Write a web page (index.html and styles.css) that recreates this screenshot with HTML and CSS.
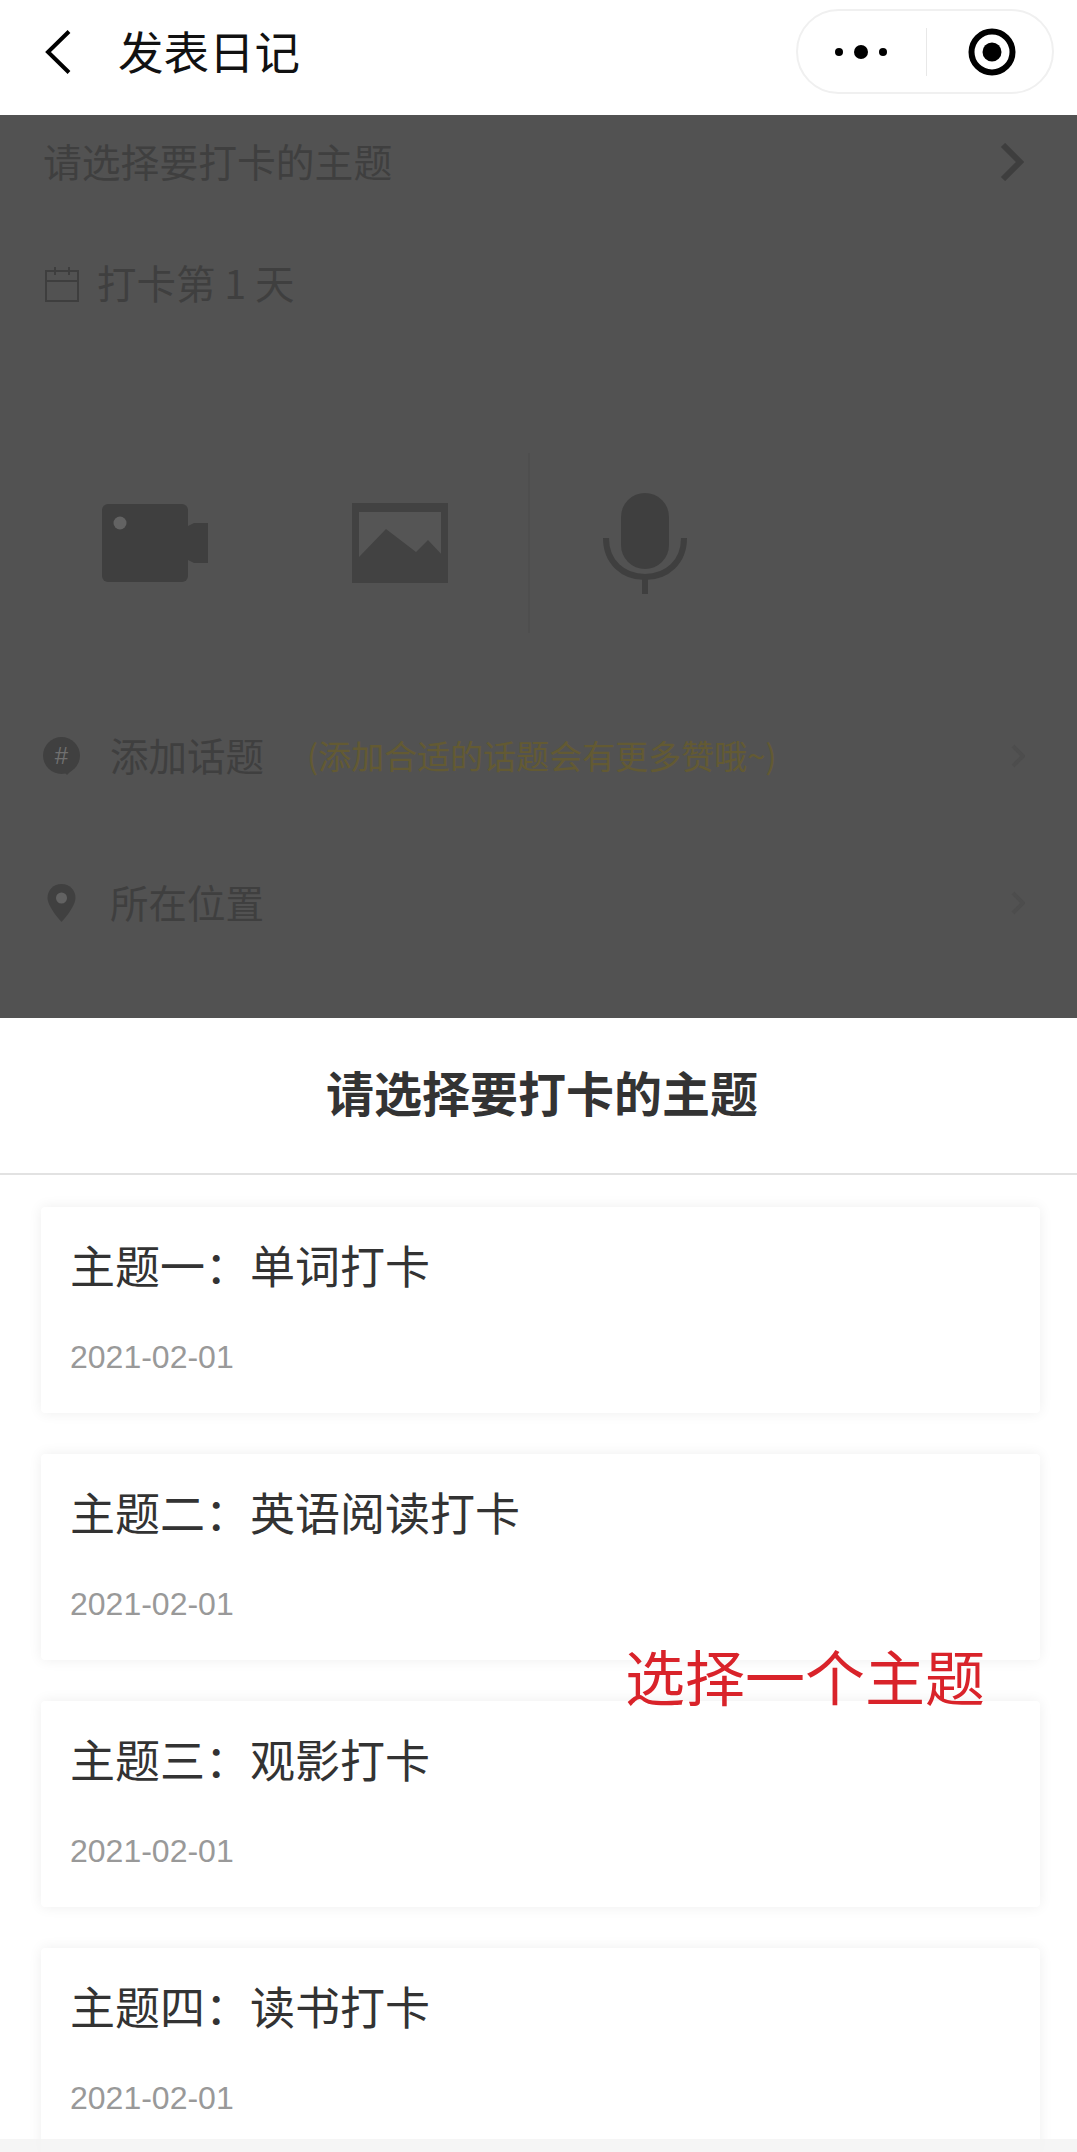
FILE: index.html
```html
<!DOCTYPE html>
<html lang="zh-CN">
<head>
  <meta charset="UTF-8" />
  <meta name="viewport" content="width=device-width, initial-scale=1.0"/>
  <title>发表日记</title>
  <link rel="stylesheet" href="styles.css">
</head>
<body>
  <div class="nav">
    <svg class="back" width="26" height="44" viewBox="0 0 26 44"><path d="M24 1.500 3 22l21 20.500" fill="none" stroke="#000" stroke-width="4"/></svg>
    <div class="nav-title">发表日记</div>
    <div class="capsule">
      <svg class="more" width="54" height="16" viewBox="0 0 54 16"><circle cx="5" cy="8" r="4" fill="#000"/><circle cx="27" cy="8" r="7" fill="#000"/><circle cx="49" cy="8" r="4" fill="#000"/></svg>
      <div class="capsule-line"></div>
      <svg class="target" width="48" height="48" viewBox="0 0 48 48"><circle cx="24" cy="24" r="20.500" fill="none" stroke="#000" stroke-width="6"/><circle cx="24" cy="24" r="9.500" fill="#000"/></svg>
    </div>
  </div>

  <div class="form">
    <div class="row-subject">
      <span>请选择要打卡的主题</span>
      <svg width="26" height="38" viewBox="0 0 26 38"><path d="M4 2l17 17L4 36" fill="none" stroke="#3e3e3e" stroke-width="6"/></svg>
    </div>
    <div class="row-day">
      <svg width="36" height="36" viewBox="0 0 36 36"><path d="M2 5h32v30H2zM2 15h32M11 1v8M25 1v8" fill="none" stroke="#3e3e3e" stroke-width="2"/></svg>
      <span>打卡第 1 天</span>
    </div>
    <div class="media">
      <svg class="media-camera" width="106" height="78" viewBox="0 0 106 78"><rect width="86" height="78" rx="6" fill="#3f3f3f"/><path d="M86 22l6-3h14v40H92l-6-3z" fill="#3f3f3f"/><circle cx="18" cy="19" r="6.500" fill="#636363"/></svg>
      <svg class="media-image" width="96" height="80" viewBox="0 0 96 80"><path d="M0 0h96v80H0z" fill="#424242"/><path d="M7 9h82v45H7z" fill="#555"/><path d="M7 54l27-28 30 23 12-12 16 17v26H7z" fill="#424242"/></svg>
      <div class="media-line"></div>
      <svg class="media-mic" width="84" height="101" viewBox="0 0 84 101"><rect x="18" width="48" height="76" rx="24" fill="#3f3f3f"/><path d="M3 45c0 24 17 39 39 39s39-15 39-39M42 84v17" fill="none" stroke="#3f3f3f" stroke-width="6"/></svg>
    </div>
    <div class="row-link">
      <svg class="row-icon" width="37" height="38" viewBox="0 0 37 38"><circle cx="18.500" cy="18.500" r="18.500" fill="#404040"/><path d="M20 34l8 0-4 4z" fill="#404040"/><text x="18.500" y="27" text-anchor="middle" class="topic-mark">#</text></svg>
      <span class="row-text">添加话题</span>
      <span class="row-hint">(添加合适的话题会有更多赞哦~)</span>
      <svg class="row-arrow" width="14" height="24" viewBox="0 0 14 24"><path d="M2 2l10 10L2 22" fill="none" stroke="#4d4d4d" stroke-width="4"/></svg>
    </div>
    <div class="row-link row-place">
      <svg class="row-icon" width="37" height="38" viewBox="0 0 36 38"><path d="M18 0c8 0 14 6 14 14 0 9-14 24-14 24S4 23 4 14C4 6 10 0 18 0z" fill="#404040"/><circle cx="18" cy="14" r="5.500" fill="#626262"/></svg>
      <span class="row-text">所在位置</span>
      <svg class="row-arrow" width="14" height="24" viewBox="0 0 14 24"><path d="M2 2l10 10L2 22" fill="none" stroke="#4d4d4d" stroke-width="4"/></svg>
    </div>
  </div>

  <div class="sheet">
    <div class="sheet-title">请选择要打卡的主题</div>
    <div class="list">
      <div class="card">
        <div class="card-name">主题一&#xFF1A;单词打卡</div>
        <div class="card-date">2021-02-01</div>
      </div>
      <div class="card">
        <div class="card-name">主题二&#xFF1A;英语阅读打卡</div>
        <div class="card-date">2021-02-01</div>
      </div>
      <div class="card">
        <div class="card-name">主题三&#xFF1A;观影打卡</div>
        <div class="card-date">2021-02-01</div>
      </div>
      <div class="card">
        <div class="card-name">主题四&#xFF1A;读书打卡</div>
        <div class="card-date">2021-02-01</div>
      </div>
    </div>
    <div class="note">选择一个主题</div>
    <div class="sheet-edge"></div>
  </div>
</body>
</html>
```

FILE: styles.css
```css
html, body {
  margin: 0;
  height: 2152px;
  overflow: hidden;
}
body {
  font-family: "Noto Sans CJK SC", "Liberation Sans", sans-serif;
  background: #fff;
  color: #333;
}
svg { display: block; flex: none; }

.nav {
  height: 115px;
  display: flex;
  align-items: center;
  padding: 0 23px 12px 45px;
  box-sizing: border-box;
  background: #fff;
}
.nav-title {
  margin: 0 0 4px 47px;
  font-size: 45.500px;
  line-height: 60px;
  color: #111;
}
.capsule {
  margin-left: auto;
  width: 258px;
  height: 85px;
  box-sizing: border-box;
  border: 2px solid #f0f0f0;
  border-radius: 43px;
  display: flex;
  align-items: center;
  padding-left: 36px;
}
.capsule-line {
  width: 1px;
  height: 48px;
  margin-left: 38px;
  background: #e8e8e8;
}
.target { margin-left: 41px; }

.form {
  height: 903px;
  background: #525252;
  color: #3f3f3f;
  font-size: 38.800px;
  padding: 0 52px 0 44px;
  box-sizing: border-box;
}
.row-subject {
  height: 94px;
  display: flex;
  align-items: center;
  justify-content: space-between;
  line-height: 50px;
}
.row-subject span { margin: 0 0 5px -1px; }
.row-day {
  height: 150px;
  display: flex;
  align-items: center;
  gap: 17px;
  line-height: 50px;
}
.row-day span { margin-bottom: 5px; font-size: 39.500px; }
.media {
  height: 372px;
  display: flex;
  align-items: center;
  margin: 0 0 0 58px;
  padding-bottom: 4px;
  box-sizing: border-box;
}
.media-image { margin-left: 144px; }
.media-line {
  width: 2px;
  height: 180px;
  margin-left: 80px;
  background: #4e4e4e;
}
.media-mic { margin-left: 73px; }

.row-link {
  height: 50px;
  display: flex;
  align-items: center;
  line-height: 50px;
}
.row-place { margin-top: 97px; }
.row-icon { margin-left: -1px; }
.row-text { margin: 0 0 4px 30px; font-size: 38.500px; }
.row-hint {
  margin: 0 0 2px 43px;
  font-size: 33px;
  color: #635a33;
}
.row-arrow { margin-left: auto; }
.topic-mark {
  font-size: 24px;
  font-family: "Liberation Sans", sans-serif;
  fill: #707070;
}

.sheet {
  position: relative;
  height: 1134px;
  overflow: hidden;
  background: #fff;
}
.sheet-title {
  height: 157px;
  line-height: 146px;
  box-sizing: border-box;
  border-bottom: 2px solid #e2e2e2;
  text-align: center;
  font-size: 48px;
  font-weight: 700;
  color: #333;
  padding-left: 7px;
}
.list {
  padding: 32px 37px 0 41px;
  display: flex;
  flex-direction: column;
  gap: 41px;
}
.card {
  height: 206px;
  flex: none;
  box-sizing: border-box;
  padding: 28px 30px 0 29px;
  background: #fff;
  border-radius: 4px;
  box-shadow: 0 0 14px rgba(0, 0, 0, 0.07);
}
.card-name {
  font-size: 45px;
  line-height: 60px;
  color: #333;
}
.card-date {
  margin-top: 42px;
  font-family: "Liberation Sans", sans-serif;
  font-size: 32px;
  line-height: 40px;
  color: #999;
}
.note {
  position: absolute;
  top: 617px;
  left: 625px;
  font-size: 60px;
  line-height: 80px;
  color: #d9232a;
}
.sheet-edge {
  position: absolute;
  left: 0;
  right: 0;
  bottom: 0;
  height: 13px;
  background: rgba(243, 243, 243, 0.8);
}
```
